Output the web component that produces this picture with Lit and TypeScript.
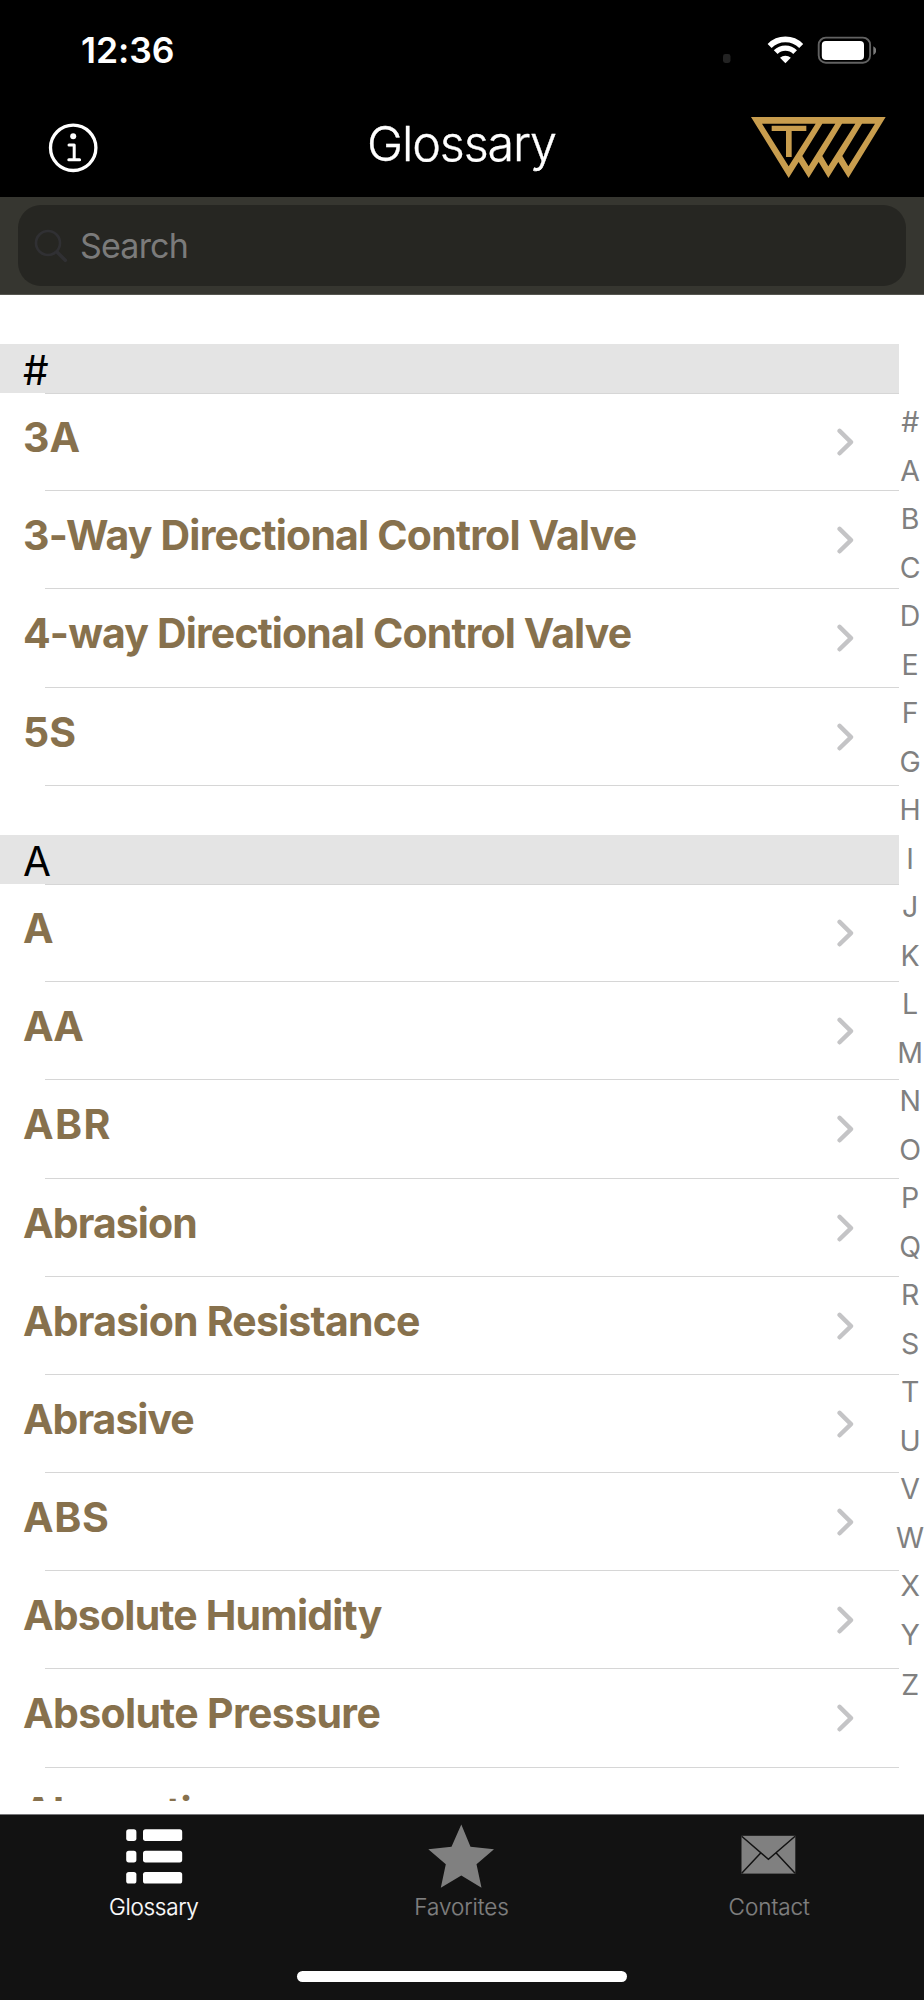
import { LitElement, html, css, svg } from "lit";
import { customElement, property } from "lit/decorators.js";

interface Term {
  label: string;
  /** Tracking in px. */
  track: number;
}
interface Section {
  letter: string;
  terms: Term[];
}

const SECTIONS: Section[] = [
  {
    letter: "#",
    terms: [
      { label: "3A", track: 0 },
      { label: "3-Way Directional Control Valve", track: -0.8 },
      { label: "4-way Directional Control Valve", track: -0.86 },
      { label: "5S", track: 0 },
    ],
  },
  {
    letter: "A",
    terms: [
      { label: "A", track: 0 },
      { label: "AA", track: -1 },
      { label: "ABR", track: 1.4 },
      { label: "Abrasion", track: -0.9 },
      { label: "Abrasion Resistance", track: -0.8 },
      { label: "Abrasive", track: -1 },
      { label: "ABS", track: 0.6 },
      { label: "Absolute Humidity", track: -0.8 },
      { label: "Absolute Pressure", track: -0.65 },
      { label: "Absorption", track: -0.7 },
    ],
  },
];

const INDEX = [..."#ABCDEFGHIJKLMNOPQRSTUVWXYZ"];

@customElement("status-bar")
class StatusBar extends LitElement {
  static styles = css`
    :host {
      display: flex;
      height: 100px;
      padding: 0 48px 0 81px;
      box-sizing: border-box;
      justify-content: space-between;
      color: #fff;
    }
    .time {
      font: 600 35.5px/102px Inter, sans-serif;
      letter-spacing: -0.1px;
    }
    .icons {
      display: block;
      width: 155px;
      height: 100px;
    }
  `;
  render() {
    return html`<span class="time">12:36</span>
      <svg class="icons" viewBox="721 0 155 100">
        <rect x="723" y="54" width="7.5" height="9" rx="2.4" fill="#232323" />
        <g fill="none" stroke="#fff">
          <path d="M769.6 45.9A22.3 22.3 0 0 1 801.2 45.9" stroke-width="5.6" />
          <path d="M775.7 52.2A13.7 13.7 0 0 1 795.1 52.2" stroke-width="5.3" />
        </g>
        <path d="M785.4 63.2L780 57.8A7.8 7.8 0 0 1 790.8 57.8Z" fill="#fff" />
        <rect x="818.7" y="37.6" width="51.4" height="25.2" rx="7.2" fill="none" stroke="#626262" stroke-width="1.9" />
        <rect x="821.8" y="41" width="42.2" height="19" rx="4" fill="#fff" />
        <path d="M873.3 46.2Q876.2 47.4 876.2 50.5T873.3 55Z" fill="#7a7a7a" />
      </svg>`;
  }
}

@customElement("title-bar")
class TitleBar extends LitElement {
  static styles = css`
    :host {
      display: grid;
      grid-template-columns: 1fr auto 1fr;
      height: 97px;
      padding: 0 38px 0 48px;
      box-sizing: border-box;
      color: #fff;
    }
    .info {
      width: 52px;
      height: 97px;
    }
    .title {
      margin: 0;
      font: 300 48.5px/88px Inter, sans-serif;
      letter-spacing: -1.15px;
      -webkit-text-stroke: 0.35px #fff;
      padding-right: 11px;
    }
    .logo {
      width: 136px;
      height: 97px;
      justify-self: end;
    }
  `;
  render() {
    return html`<svg class="info" viewBox="48 100 52 97">
        <circle cx="73.2" cy="147.8" r="22.7" fill="none" stroke="#fff" stroke-width="3.3" />
        <circle cx="73.2" cy="136.3" r="3" fill="#fff" />
        <path d="M69 144.9H74.2V159.7M68.8 159.7H79.6" fill="none" stroke="#fff" stroke-width="3" stroke-linecap="round" stroke-linejoin="round" />
      </svg>
      <h1 class="title">Glossary</h1>
      <svg class="logo" viewBox="750 100 136 97">
        <g transform="translate(740 100) scale(0.33333)" fill="#c89d4e">
          <path
            fill-rule="evenodd"
            d="M33 51H437L325 234L295 186L265 234L236 186L206 234L176 186L146 234ZM66 71L146 199L227 71ZM247 71L187 168L206 199L286 71ZM306 71L247 168L265 199L346 71ZM366 71L307 168L325 199L405 71Z"
          />
          <path d="M95 77H199V93H155V171H138V93H95Z" />
        </g>
      </svg>`;
  }
}

@customElement("search-field")
class SearchField extends LitElement {
  static styles = css`
    :host {
      display: block;
      height: 98px;
      padding: 8px 18px 0;
      box-sizing: border-box;
      background: #363630;
      border-bottom: 1px solid #55554f;
    }
    .field {
      display: flex;
      height: 81px;
      border-radius: 23px;
      background: #262622;
      color: #7b7b7b;
    }
    .glass {
      width: 46px;
      height: 80px;
      margin-right: 16px;
      flex: none;
    }
    .hint {
      font: 400 34px/81px Inter, sans-serif;
      letter-spacing: -0.8px;
    }
  `;
  render() {
    return html`<div class="field">
      <svg class="glass" viewBox="18 205 46 80" overflow="visible">
        <circle cx="48" cy="243" r="12" fill="none" stroke="#303033" stroke-width="2.6" />
        <path d="M57 252L65.3 260.3" stroke="#303033" stroke-width="3.6" stroke-linecap="round" />
      </svg>
      <span class="hint">Search</span>
    </div>`;
  }
}

@customElement("glossary-section")
class GlossarySection extends LitElement {
  @property({ attribute: false }) section!: Section;
  static styles = css`
    :host {
      display: block;
      padding-top: 49px;
    }
    .head {
      height: 49.1px;
      background: #e4e4e4;
      color: #000;
      font: 400 40.5px/53px Inter, sans-serif;
      padding-left: 23px;
    }
    .row {
      display: flex;
      justify-content: space-between;
      height: 98.2px;
      padding: 0 45px 0 23px;
      box-sizing: border-box;
      background: linear-gradient(#d6d6d6, #d6d6d6) 45px 100% / 100% 1px no-repeat;
    }
    .label {
      font: 700 41px/89px Inter, sans-serif;
      color: #87714d;
      white-space: nowrap;
    }
    .chevron {
      width: 17px;
      height: 98px;
      flex: none;
    }
    .rule {
      height: 1px;
      margin: 0 0 -1px 45px;
      background: #d6d6d6;
    }
  `;
  render() {
    return html`<div class="head">${this.section.letter}</div>
      <div class="rule"></div>
      ${this.section.terms.map(
        (t) => html`<div class="row">
          <span class="label" style="letter-spacing:${t.track}px">${t.label}</span>
          <svg class="chevron" viewBox="0 0 17 98">
            <path d="M2.6 37.9L14 49.1L2.6 60.3" fill="none" stroke="#c4c4c6" stroke-width="4.4" stroke-linecap="round" stroke-linejoin="round" />
          </svg>
        </div>`
      )}`;
  }
}

@customElement("alpha-index")
class AlphaIndex extends LitElement {
  static styles = css`
    :host {
      display: flex;
      flex-direction: column;
      align-items: center;
      width: 28px;
      margin-left: -3px;
      padding-top: 103px;
      font: 400 28.5px/48.5px Inter, sans-serif;
      color: #808080;
    }
    .letter {
      height: 48.5px;
      letter-spacing: -0.3px;
    }
    .letter:last-child {
      padding-top: 2px;
    }
  `;
  render() {
    return INDEX.map((l) => html`<span class="letter">${l}</span>`);
  }
}

const ICONS = {
  list: svg`<g fill="#fff">${[14.3, 35.8, 57].map(
    (y) => svg`<rect x="16.2" y=${y} width="10.2" height="11.6" rx="2.6"/><rect x="33" y=${y} width="39.2" height="11.6" rx="2.6"/>`
  )}</g>`,
  star: svg`<path fill="#808080" d="M44.3 9.5L53.5 31.7L77 34.2L59.5 49.3L64.5 72.8L44.3 60.6L23.8 72.8L28.8 49.3L11.3 34.2L34.5 31.7Z"/>`,
  mail: svg`<rect x="16.5" y="20.8" width="53.8" height="37.8" fill="#808080"/><path d="M16.7 21.3L43.4 44.3L70.1 21.3M16.7 58.3L35.7 38M70.1 58.3L51.2 38" fill="none" stroke="#121212" stroke-width="1.5"/>`,
};

@customElement("tab-bar")
class TabBar extends LitElement {
  static styles = css`
    :host {
      display: flex;
      flex-direction: column;
      align-items: center;
      height: 186px;
      box-sizing: border-box;
      background: #121212;
      border-top: 1px solid #77777a;
    }
    .tabs {
      display: grid;
      grid-template-columns: repeat(3, 1fr);
      width: 100%;
      height: 156px;
      padding: 0 1px 0 0;
      box-sizing: border-box;
    }
    .tab {
      display: flex;
      flex-direction: column;
      align-items: center;
      color: #808080;
      font: 300 22.5px/30px Inter, sans-serif;
      letter-spacing: -0.05px;
      -webkit-text-stroke: 0.2px currentColor;
    }
    .active {
      color: #fff;
      letter-spacing: -0.3px;
    }
    .icon {
      width: 88px;
      height: 77px;
    }
    .home {
      width: 330px;
      height: 11px;
      border-radius: 6px;
      background: #fff;
    }
  `;
  render() {
    return html`<nav class="tabs">
        <div class="tab active"><svg class="icon" viewBox="0 0 88 77">${ICONS.list}</svg><span>Glossary</span></div>
        <div class="tab"><svg class="icon" viewBox="0 0 88 77">${ICONS.star}</svg><span>Favorites</span></div>
        <div class="tab"><svg class="icon" viewBox="0 0 88 77">${ICONS.mail}</svg><span>Contact</span></div>
      </nav>
      <div class="home"></div>`;
  }
}

@customElement("app-root")
class AppRoot extends LitElement {
  static styles = css`
    :host {
      display: flex;
      flex-direction: column;
      width: 924px;
      height: 2000px;
      overflow: hidden;
      background: #fff;
    }
    .top {
      background: #000;
      flex: none;
    }
    .body {
      display: flex;
      height: 1506px;
      margin-bottom: 13px;
      overflow: hidden;
      flex: none;
    }
    .list {
      width: 899px;
      flex: none;
    }
  `;
  render() {
    return html`<header class="top">
        <status-bar></status-bar>
        <title-bar></title-bar>
        <search-field></search-field>
      </header>
      <main class="body">
        <div class="list">${SECTIONS.map((s) => html`<glossary-section .section=${s}></glossary-section>`)}</div>
        <alpha-index></alpha-index>
      </main>
      <tab-bar></tab-bar>`;
  }
}
